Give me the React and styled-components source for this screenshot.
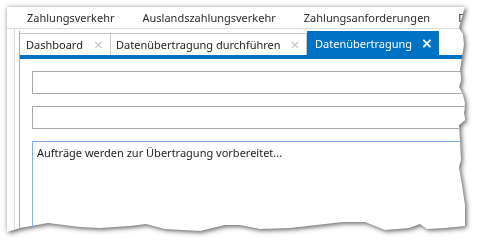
import React from "react";
import styled, { createGlobalStyle } from "styled-components";

const Global = createGlobalStyle`
  html, body { margin: 0; padding: 0; background: #ffffff; }
  body { font-family: "Noto Sans", "Open Sans", sans-serif; }
  * { box-sizing: border-box; }
`;

const Shadow = styled.div`
  padding: 7px;
  width: 478px;
  height: 243px;
  overflow: hidden;
  filter: drop-shadow(0 0 2px rgba(0, 0, 0, 0.28)) drop-shadow(2px 2px 2px rgba(0, 0, 0, 0.45));
`;

const Sheet = styled.div`
  width: 459px;
  height: 226px;
  background: #ffffff;
  overflow: hidden;
  display: flex;
  flex-direction: column;
  clip-path: polygon(
    0px 0px, 458px 0px, 455px 10px, 452px 21px, 456px 27px, 457px 38px, 455px 50px,
    453px 63px, 454px 73px, 452px 80px, 456px 88px, 458px 96px, 457px 106px, 458px 113px,
    452px 118px, 453px 133px, 454px 153px, 452px 160px, 455px 178px, 458px 198px, 458px 219px,
    438px 221px, 420px 222px, 413px 217px, 402px 221px, 378px 223px, 358px 215px, 336px 215px,
    283px 221px, 253px 222px, 233px 218px, 218px 218px, 193px 224px, 158px 222px, 139px 217px,
    123px 219px, 93px 221px, 73px 220px, 41px 216px, 13px 221px, 0px 225px
  );
`;

const MenuBar = styled.div`
  display: flex;
  height: 22px;
  flex-shrink: 0;
  padding-left: 6px;
  border-bottom: 1px solid #dadada;
  white-space: nowrap;
`;

const MenuItem = styled.div`
  padding: 0 14px;
  font-size: 11px;
  line-height: 21px;
  color: #2b2b2b;
`;

const Body = styled.div`
  flex: 1;
  display: flex;
  padding-left: 7px;
  min-height: 0;
`;

const Frame = styled.div`
  flex: 1;
  display: flex;
  border-left: 1px solid #dcdcdc;
  padding: 2px 0 0 4px;
  min-width: 0;
`;

const TabControl = styled.div`
  flex: 1;
  display: flex;
  flex-direction: column;
  border-left: 1px solid #a9a9a9;
  min-width: 0;
`;

const TabStrip = styled.div`
  display: flex;
  align-items: flex-end;
  height: 24px;
  flex-shrink: 0;
  white-space: nowrap;
`;

const Tab = styled.div`
  display: flex;
  align-items: center;
  height: ${(p) => (p.$active ? "24px" : "22px")};
  width: ${(p) => p.$w}px;
  padding: 0 0 0 ${(p) => p.$pl}px;
  gap: ${(p) => p.$gap}px;
  font-size: 11px;
  color: ${(p) => (p.$active ? "#ffffff" : "#1e1e1e")};
  background: ${(p) => (p.$active ? "#0072c6" : "#ffffff")};
  border-top: ${(p) => (p.$active ? "none" : "1px solid #c9c9c9")};
  border-right: ${(p) => (p.$active ? "none" : "1px solid #c9c9c9")};
  flex-shrink: 0;
`;

const Close = styled.span`
  font-size: ${(p) => (p.$active ? "14px" : "13px")};
  line-height: 1;
  margin-top: -1px;
  color: ${(p) => (p.$active ? "#ffffff" : "#c2c2c2")};
  font-family: "DejaVu Sans", sans-serif;
  font-weight: ${(p) => (p.$active ? 600 : 400)};
`;

const BlueLine = styled.div`
  height: 4px;
  background: #0072c6;
  flex-shrink: 0;
`;

const Content = styled.div`
  flex: 1;
  display: flex;
  flex-direction: column;
  gap: 12px;
  padding: 12px 0 0 12px;
`;

const Input = styled.div`
  height: 23px;
  width: 460px;
  border: 1px solid #ababab;
  background: #fff;
  flex-shrink: 0;
`;

const TextArea = styled.div`
  flex: 1;
  width: 460px;
  border: 1px solid #7eb4ea;
  border-bottom: none;
  padding: 3px 4px;
  font-size: 11px;
  line-height: 16px;
  color: #1e1e1e;
  white-space: nowrap;
`;

export default function App() {
  return (
    <>
      <Global />
      <Shadow>
        <Sheet>
          <MenuBar>
            <MenuItem>Zahlungsverkehr</MenuItem>
            <MenuItem>Auslandszahlungsverkehr</MenuItem>
            <MenuItem>Zahlungsanforderungen</MenuItem>
            <MenuItem>Datenübertragung</MenuItem>
          </MenuBar>
          <Body>
            <Frame>
              <TabControl>
                <TabStrip>
                  <Tab $w={91} $pl={6} $gap={10}>
                    Dashboard<Close>×</Close>
                  </Tab>
                  <Tab $w={196} $pl={5} $gap={9}>
                    Datenübertragung durchführen<Close>×</Close>
                  </Tab>
                  <Tab $active $w={132} $pl={8} $gap={9}>
                    Datenübertragung<Close $active>×</Close>
                  </Tab>
                </TabStrip>
                <BlueLine />
                <Content>
                  <Input />
                  <Input />
                  <TextArea>Aufträge werden zur Übertragung vorbereitet...</TextArea>
                </Content>
              </TabControl>
            </Frame>
          </Body>
        </Sheet>
      </Shadow>
    </>
  );
}
